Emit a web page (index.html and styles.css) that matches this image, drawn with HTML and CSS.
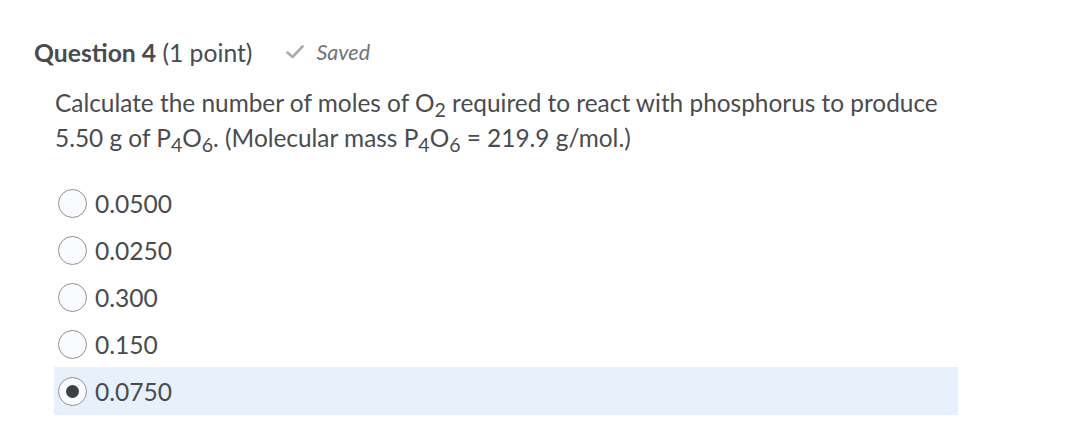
FILE: index.html
```
<!DOCTYPE html>
<html>
<head>
<meta charset="utf-8">
<link rel="stylesheet" href="styles.css">
</head>
<body>
<div class="question">
  <div class="header">
    <h2 class="title"><strong>Question 4</strong> <span class="pts">(1 point)</span></h2>
    <span class="saved">
      <svg class="check" width="18" height="14" viewBox="0 0 18 14"><path d="M1.5 7.5 L6.5 12 L16.5 1.5" fill="none" stroke="#a9acaf" stroke-width="2.6" stroke-linecap="round" stroke-linejoin="round"/></svg>
      <em>Saved</em>
    </span>
  </div>
  <p class="prompt">Calculate the number of moles of O<sub>2</sub> required to react with phosphorus to produce 5.50 g of P<sub>4</sub>O<sub>6</sub>. (Molecular mass P<sub>4</sub>O<sub>6</sub> = 219.9 g/mol.)</p>
  <div class="options">
    <label class="option"><span class="radio"></span><span>0.0500</span></label>
    <label class="option"><span class="radio"></span><span>0.0250</span></label>
    <label class="option"><span class="radio"></span><span>0.300</span></label>
    <label class="option"><span class="radio"></span><span>0.150</span></label>
    <label class="option selected"><span class="radio checked"></span><span>0.0750</span></label>
  </div>
</div>
</body>
</html>
```
FILE: styles.css
```
html, body { margin: 0; padding: 0; background: #fff; }
body { font-family: Lato, "Open Sans", sans-serif; color: #494c4e; }
.question { padding: 36px 0 0 34px; width: 924px; }
.header { display: flex; align-items: center; gap: 34px; height: 32px; }
.title { margin: 0; font-size: 24.7px; font-weight: 400; color: #494c4e; white-space: nowrap; }
.title strong { font-weight: 700; }
.saved { display: flex; align-items: center; gap: 12px; color: #6e7376; font-size: 21.5px; }
.saved em { font-style: italic; }
.prompt { margin: 16.5px 0 0 21px; font-size: 24.4px; line-height: 35px; color: #494c4e; }
.prompt sub { font-size: 0.8em; vertical-align: -5px; line-height: 0; }
.options { margin: 25.5px 0 0 20px; display: flex; flex-direction: column; }
.option { display: flex; align-items: center; height: 47px; font-size: 24.6px; color: #494c4e; }
.option:last-child { height: 48px; margin-top: -1px; }
.option .radio { box-sizing: border-box; width: 29px; height: 29px; border: 1px solid #8f9294; border-radius: 50%; background: #f9fbff; margin: 0 8px 0 4px; display: flex; align-items: center; justify-content: center; flex: none; }
.option.selected { background: #e8f1fb; }
.radio.checked::after { content: ""; width: 13px; height: 13px; border-radius: 50%; background: #3d4043; }
```
